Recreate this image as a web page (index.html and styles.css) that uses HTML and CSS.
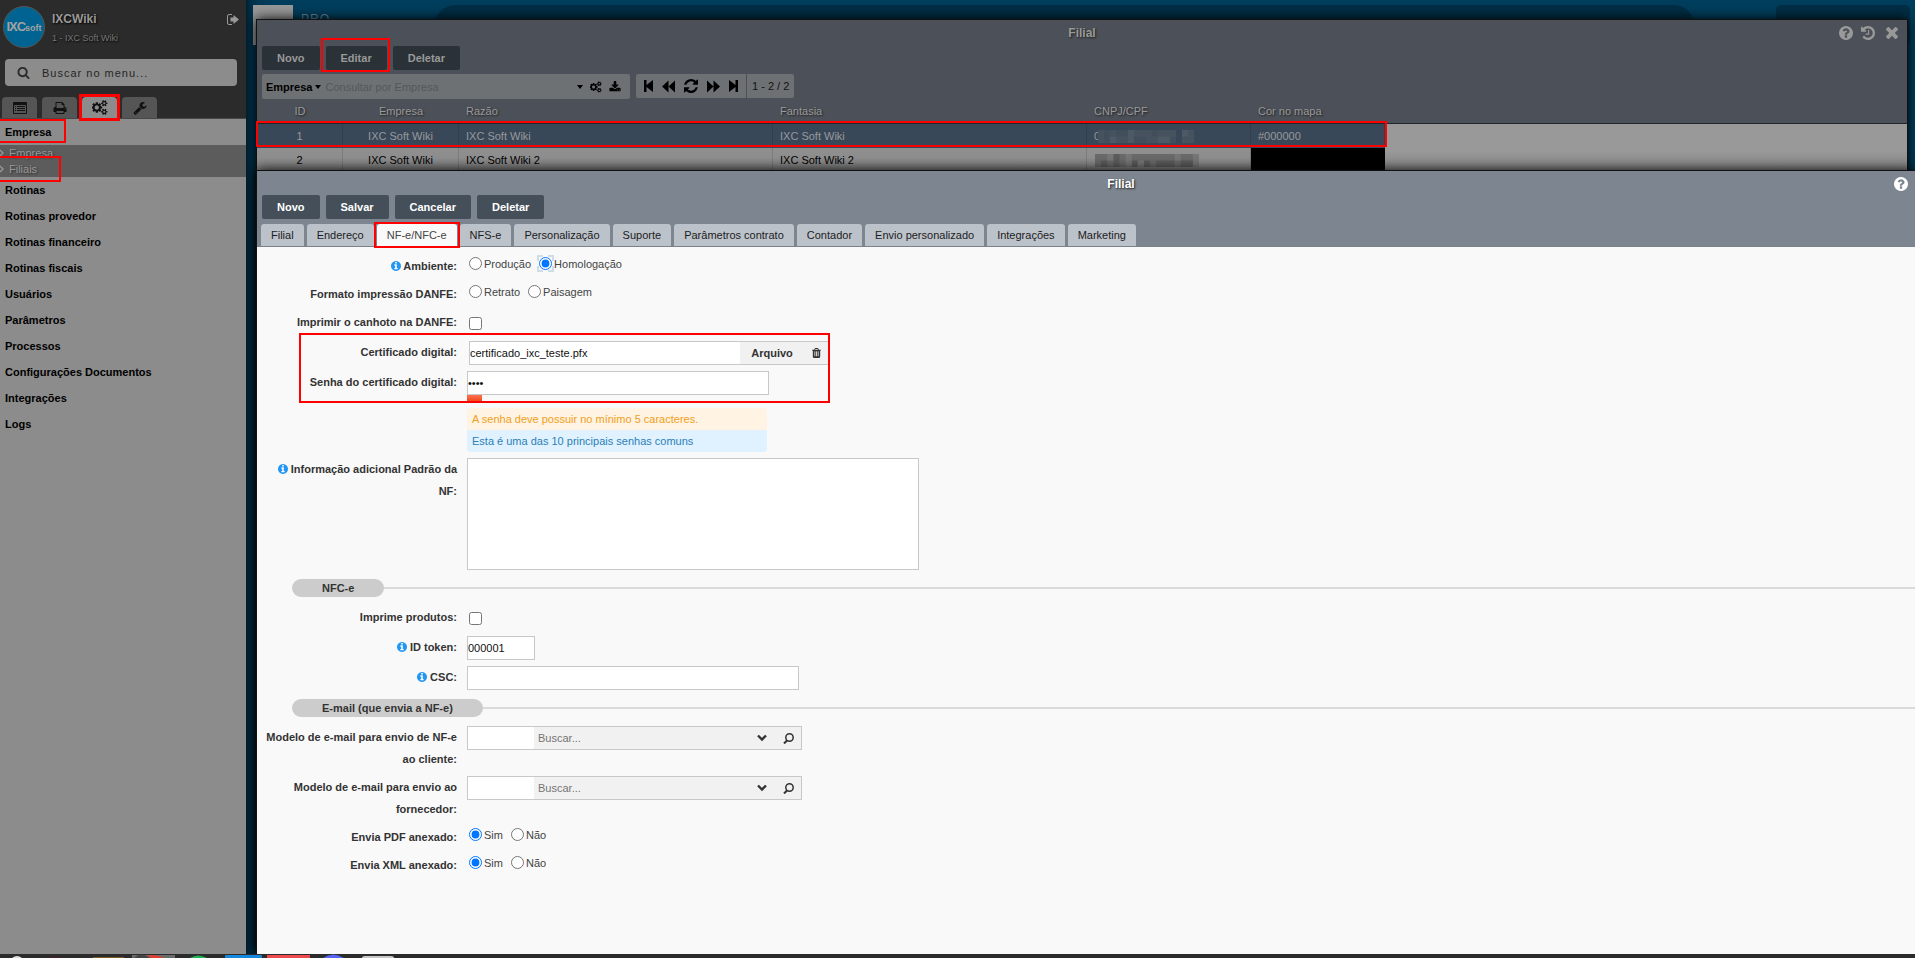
FILE: index.html
```
<!DOCTYPE html>
<html lang="pt-BR">
<head>
<meta charset="utf-8">
<title>Filial</title>
<link rel="stylesheet" href="styles.css">
</head>
<body>
<svg class="sprite" aria-hidden="true">
<symbol id="i-search" viewBox="0 0 1792 1792"><path d="M1216 832q0-185-131.500-316.500t-316.500-131.500-316.500 131.500-131.500 316.500 131.500 316.500 316.500 131.500 316.500-131.500 131.500-316.500zm512 832q0 52-38 90t-90 38q-54 0-90-38l-343-342q-179 124-399 124-143 0-273.500-55.500t-225-150-150-225-55.500-273.500 55.500-273.500 150-225 225-150 273.500-55.500 273.500 55.500 225 150 150 225 55.500 273.500q0 220-124 399l343 343q37 37 37 90z"/></symbol>
<symbol id="i-wrench" viewBox="0 0 1792 1792"><path d="M448 1472q0-26-19-45t-45-19-45 19-19 45 19 45 45 19 45-19 19-45zm644-420l-682 682q-37 37-90 37-52 0-91-37l-106-108q-38-36-38-90 0-53 38-91l681-681q39 98 114.500 173.500t173.500 114.500zm634-435q0 39-23 106-47 134-164.500 217.500t-258.500 83.500q-185 0-316.500-131.500t-131.500-316.500 131.500-316.500 316.500-131.500q58 0 121.500 16.500t107.500 46.500q16 11 16 28t-16 28l-293 169v224l193 107q5-3 79-48.500t135.500-81 70.500-35.500q15 0 23.500 10t8.500 25z"/></symbol>
<symbol id="i-print" viewBox="0 0 1792 1792"><path d="M448 1536h896v-256h-896v256zm0-640h896v-384h-160q-40 0-68-28t-28-68v-160h-640v640zm1152 64q0-26-19-45t-45-19-45 19-19 45 19 45 45 19 45-19 19-45zm128 0v416q0 13-9.500 22.500t-22.500 9.500h-224v160q0 40-28 68t-68 28h-960q-40 0-68-28t-28-68v-160h-224q-13 0-22.500-9.500t-9.500-22.500v-416q0-79 56.500-135.500t135.500-56.500h64v-544q0-40 28-68t68-28h672q40 0 88 20t76 48l152 152q28 28 48 76t20 88v256h64q79 0 135.500 56.500t56.500 135.500z"/></symbol>
<symbol id="i-cogs" viewBox="0 0 1920 1792"><path d="M832 896q0-106-75-181t-181-75-181 75-75 181 75 181 181 75 181-75 75-181zm768 512q0-52-38-90t-90-38-90 38-38 90q0 53 37.500 90.500t90.500 37.500 90.500-37.500 37.500-90.500zm0-1024q0-52-38-90t-90-38-90 38-38 90q0 53 37.500 90.500t90.500 37.500 90.500-37.500 37.500-90.500zm-384 421v185q0 10-7 19.500t-16 10.500l-155 24q-11 35-32 76 34 48 90 115 7 11 7 20 0 12-7 19-23 30-82.500 89.500t-78.500 59.500q-11 0-21-7l-115-90q-37 19-77 31-11 108-23 155-7 24-30 24h-186q-11 0-20-7.500t-10-17.500l-23-153q-34-10-75-31l-118 89q-7 7-20 7-11 0-21-8-144-133-144-160 0-9 7-19 10-14 41-53t47-61q-23-44-35-82l-152-24q-10-1-17-9.500t-7-19.500v-185q0-10 7-19.500t16-10.500l155-24q11-35 32-76-34-48-90-115-7-11-7-20 0-12 7-20 22-30 82-89t79-59q11 0 21 7l115 90q34-18 77-32 11-108 23-154 7-24 30-24h186q11 0 20 7.500t10 17.500l23 153q34 10 75 31l118-89q8-7 20-7 11 0 21 8 144 133 144 160 0 8-7 19-12 16-42 54t-45 60q23 48 34 82l152 23q10 2 17 10.500t7 19.500zm640 533v140q0 16-149 31-12 27-30 52 51 113 51 138 0 4-4 7-122 71-124 71-8 0-46-47t-52-68q-20 2-30 2t-30-2q-14 21-52 68t-46 47q-2 0-124-71-4-3-4-7 0-25 51-138-18-25-30-52-149-15-149-31v-140q0-16 149-31 13-29 30-52-51-113-51-138 0-4 4-7 4-2 35-20t59-34 30-16q8 0 46 46.500t52 67.500q20-2 30-2t30 2q51-71 92-112l6-2q4 0 124 70 4 3 4 7 0 25-51 138 17 23 30 52 149 15 149 31zm0-1024v140q0 16-149 31-12 27-30 52 51 113 51 138 0 4-4 7-122 71-124 71-8 0-46-47t-52-68q-20 2-30 2t-30-2q-14 21-52 68t-46 47q-2 0-124-71-4-3-4-7 0-25 51-138-18-25-30-52-149-15-149-31v-140q0-16 149-31 13-29 30-52-51-113-51-138 0-4 4-7 4-2 35-20t59-34 30-16q8 0 46 46.500t52 67.500q20-2 30-2t30 2q51-71 92-112l6-2q4 0 124 70 4 3 4 7 0 25-51 138 17 23 30 52 149 15 149 31z"/></symbol>
<symbol id="i-help" viewBox="128 128 1536 1536"><path d="M1024 1376v-192q0-14-9-23t-23-9h-192q-14 0-23 9t-9 23v192q0 14 9 23t23 9h192q14 0 23-9t9-23zm256-672q0-88-55.500-163t-138.500-116-170-41q-243 0-371 213-15 24 8 42l132 100q7 6 19 6 16 0 25-12 53-68 86-92 34-24 86-24 48 0 85.500 26t37.500 59q0 38-20 61t-68 45q-63 28-115.500 86.500t-52.500 125.500v36q0 14 9 23t23 9h192q14 0 23-9t9-23q0-19 21.500-49.500t54.500-49.500q32-18 49-28.500t46-35 44.500-48 28-60.500 12.500-81zm384 192q0 209-103 385.500t-279.500 279.500-385.500 103-385.500-103-279.500-279.500-103-385.500 103-385.500 279.500-279.500 385.500-103 385.500 103 279.500 279.500 103 385.500z"/></symbol>
<symbol id="i-info" viewBox="128 128 1536 1536"><path d="M1152 1376v-160q0-14-9-23t-23-9h-96v-512q0-14-9-23t-23-9h-320q-14 0-23 9t-9 23v160q0 14 9 23t23 9h96v320h-96q-14 0-23 9t-9 23v160q0 14 9 23t23 9h448q14 0 23-9t9-23zm-128-896v-160q0-14-9-23t-23-9h-192q-14 0-23 9t-9 23v160q0 14 9 23t23 9h192q14 0 23-9t9-23zm640 416q0 209-103 385.500t-279.500 279.500-385.500 103-385.500-103-279.500-279.500-103-385.500 103-385.500 279.500-279.500 385.500-103 385.500 103 279.500 279.500 103 385.500z"/></symbol>
<symbol id="i-history" viewBox="128 128 1536 1536"><path d="M1664 896q0 156-61 298t-164 245-245 164-298 61q-172 0-327-72.500t-264-204.500q-7-10-6.500-22.500t8.500-20.500l137-138q10-9 25-9 16 2 23 12 73 95 179 147t225 52q104 0 198.500-40.500t163.500-109.500 109.500-163.500 40.500-198.500-40.500-198.500-109.500-163.500-163.500-109.500-198.500-40.500q-98 0-188 35.500t-160 101.500l137 138q31 30 14 69-17 40-59 40h-448q-26 0-45-19t-19-45v-448q0-42 40-59 39-17 69 14l130 129q107-101 244.500-156.500t284.500-55.500q156 0 298 61t245 164 164 245 61 298zm-640-288v448q0 14-9 23t-23 9h-320q-14 0-23-9t-9-23v-64q0-14 9-23t23-9h224v-352q0-14 9-23t23-9h64q14 0 23 9t9 23z"/></symbol>
<symbol id="i-close" viewBox="302 366 1188 1188"><path d="M1490 1322q0 40-28 68l-136 136q-28 28-68 28t-68-28l-294-294-294 294q-28 28-68 28t-68-28l-136-136q-28-28-28-68t28-68l294-294-294-294q-28-28-28-68t28-68l136-136q28-28 68-28t68 28l294 294 294-294q28-28 68-28t68 28l136 136q28 28 28 68t-28 68l-294 294 294 294q28 28 28 68z"/></symbol>
<symbol id="i-download" viewBox="0 0 1792 1792"><path d="M1344 1344q0-26-19-45t-45-19-45 19-19 45 19 45 45 19 45-19 19-45zm256 0q0-26-19-45t-45-19-45 19-19 45 19 45 45 19 45-19 19-45zm128-224v320q0 40-28 68t-68 28h-1472q-40 0-68-28t-28-68v-320q0-40 28-68t68-28h465l135 136q58 56 136 56t136-56l136-136h464q40 0 68 28t28 68zm-325-569q17 41-14 70l-448 448q-18 19-45 19t-45-19l-448-448q-31-29-14-70 17-39 59-39h256v-448q0-26 19-45t45-19h256q26 0 45 19t19 45v448h256q42 0 59 39z"/></symbol>
<symbol id="i-refresh" viewBox="128 128 1536 1536"><path d="M1639 1056q0 5-1 7-64 268-268 434.500t-478 166.500q-146 0-282.500-55t-243.500-157l-129 129q-19 19-45 19t-45-19-19-45v-448q0-26 19-45t45-19h448q26 0 45 19t19 45-19 45l-137 137q71 66 161 102t187 36q134 0 250-65t186-179q11-17 53-117 8-23 30-23h192q13 0 22.500 9.500t9.500 22.500zm25-800v448q0 26-19 45t-45 19h-448q-26 0-45-19t-19-45 19-45l138-138q-148-137-349-137-134 0-250 65t-186 179q-11 17-53 117-8 23-30 23h-199q-13 0-22.500-9.500t-9.500-22.500v-7q65-268 270-434.500t480-166.500q146 0 284 55.500t245 156.500l130-129q19-19 45-19t45 19 19 45z"/></symbol>
<symbol id="i-trash" viewBox="192 128 1408 1536"><path d="M704 1376v-704q0-14-9-23t-23-9h-64q-14 0-23 9t-9 23v704q0 14 9 23t23 9h64q14 0 23-9t9-23zm256 0v-704q0-14-9-23t-23-9h-64q-14 0-23 9t-9 23v704q0 14 9 23t23 9h64q14 0 23-9t9-23zm256 0v-704q0-14-9-23t-23-9h-64q-14 0-23 9t-9 23v704q0 14 9 23t23 9h64q14 0 23-9t9-23zm-544-992h448l-48-117q-7-9-17-11h-317q-10 2-17 11zm928 32v64q0 14-9 23t-23 9h-96v948q0 83-47 143.500t-113 60.500h-832q-66 0-113-58.500t-47-141.500v-952h-96q-14 0-23-9t-9-23v-64q0-14 9-23t23-9h309l70-167q15-37 54-63t79-26h320q40 0 79 26t54 63l70 167h309q14 0 23 9t9 23z"/></symbol>
<symbol id="i-list" viewBox="0 0 14 12"><path fill-rule="evenodd" d="M1 0h12q1 0 1 1v10q0 1-1 1H1q-1 0-1-1V1q0-1 1-1zM1 3v8h12V3zM2 4h1v1H2zM4 4h8v1H4zM2 6h1v1H2zM4 6h8v1H4zM2 8h1v1H2zM4 8h8v1H4z"/></symbol>
<symbol id="i-logout" viewBox="0 0 12 11"><path fill="none" stroke="currentColor" d="M5 .5H2Q.5 .5 .5 2v7Q.5 10.500 2 10.500h3"/><path d="M6.500 1L12 5.500 6.500 10V7.500H3.500v-4h3z"/></symbol>
<symbol id="i-first" viewBox="0 0 9 12"><path d="M0 0h2.500v5L9 0v12L2.500 7v5H0z"/></symbol>
<symbol id="i-prev" viewBox="0 0 13 12"><path d="M6.500 0v12L0 6zM13 0v12L6.500 6z"/></symbol>
<symbol id="i-next" viewBox="0 0 13 12"><path d="M0 0v12l6.500-6zM6.500 0v12L13 6z"/></symbol>
<symbol id="i-last" viewBox="0 0 9 12"><path d="M9 0H6.500v5L0 0v12l6.500-5v5H9z"/></symbol>
<symbol id="i-caret" viewBox="0 0 6 4"><path d="M0 0h6L3 4z"/></symbol>
<symbol id="i-chevron" viewBox="0 0 10 8"><path fill="none" stroke="currentColor" stroke-width="2.400" d="M1 1.500l4 4 4-4"/></symbol>
<symbol id="i-lens" viewBox="0 0 11 11"><circle cx="6.500" cy="4.500" r="3.700" fill="none" stroke="currentColor" stroke-width="1.500"/><path stroke="currentColor" stroke-width="2" d="M4 7.500L1 10.500"/></symbol>
<symbol id="i-angle" viewBox="0 0 4 8"><path fill="none" stroke="currentColor" stroke-width="1.300" d="M0 1l3 3-3 3"/></symbol>
</svg>

<main class="app">
  <nav class="sidebar">
    <div class="sidebar-top">
      <div class="profile">
        <div class="logo">IXC<span class="logo-small">soft</span></div>
        <div class="who"><strong class="who-name">IXCWiki</strong><span class="who-company">1 - IXC Soft Wiki</span></div>
        <button class="icon-button" aria-label="Sair"><svg class="i-exit"><use href="#i-logout"/></svg></button>
      </div>
      <label class="menu-search"><svg class="i-13"><use href="#i-search"/></svg><input class="menu-input" type="text" placeholder="Buscar no menu..." aria-label="Buscar no menu"></label>
      <div class="menu-tabs">
        <button class="menu-tab" aria-label="Cadastros"><svg class="i-list"><use href="#i-list"/></svg></button>
        <button class="menu-tab" aria-label="Relatórios"><svg class="i-14"><use href="#i-print"/></svg></button>
        <button class="menu-tab menu-tab-on" aria-label="Sistema"><svg class="i-16"><use href="#i-cogs"/></svg><span class="mark mark-gear"></span></button>
        <button class="menu-tab" aria-label="Ferramentas"><svg class="i-14"><use href="#i-wrench"/></svg></button>
      </div>
    </div>
    <div class="menu">
      <a class="menu-item" href="#">Empresa<span class="mark mark-company"></span></a>
      <div class="submenu">
        <a class="submenu-item" href="#"><svg class="i-angle"><use href="#i-angle"/></svg>Empresa</a>
        <a class="submenu-item" href="#"><svg class="i-angle"><use href="#i-angle"/></svg>Filiais<span class="mark mark-branches"></span></a>
      </div>
      <a class="menu-item" href="#">Rotinas</a>
      <a class="menu-item" href="#">Rotinas provedor</a>
      <a class="menu-item" href="#">Rotinas financeiro</a>
      <a class="menu-item" href="#">Rotinas fiscais</a>
      <a class="menu-item" href="#">Usuários</a>
      <a class="menu-item" href="#">Parâmetros</a>
      <a class="menu-item" href="#">Processos</a>
      <a class="menu-item" href="#">Configurações Documentos</a>
      <a class="menu-item" href="#">Integrações</a>
      <a class="menu-item" href="#">Logs</a>
    </div>
  </nav>

  <div class="desktop">
    <div class="backdrop">
      <span class="backdrop-logo"></span>
      <span class="backdrop-name">PRO —</span>
      <span class="backdrop-bar"></span>
      <span class="backdrop-card"></span>
    </div>

    <section class="window window-list">
      <header class="titlebar titlebar-list">
        <h2 class="title">Filial</h2>
        <div class="title-actions">
          <button class="icon-button" aria-label="Ajuda"><svg class="i-14"><use href="#i-help"/></svg></button>
          <button class="icon-button" aria-label="Histórico"><svg class="i-14"><use href="#i-history"/></svg></button>
          <button class="icon-button icon-close" aria-label="Fechar"><svg class="i-12"><use href="#i-close"/></svg></button>
        </div>
      </header>
      <div class="buttons">
        <button class="btn btn-dim">Novo</button>
        <button class="btn btn-dim">Editar<span class="mark mark-edit"></span></button>
        <button class="btn btn-dim">Deletar</button>
      </div>
      <div class="tools">
        <div class="query">
          <button class="query-field">Empresa <svg class="i-caret"><use href="#i-caret"/></svg></button>
          <input class="query-input" type="text" placeholder="Consultar por Empresa" aria-label="Consultar por Empresa">
          <button class="icon-button" aria-label="Opções"><svg class="i-caret"><use href="#i-caret"/></svg></button>
          <button class="icon-button" aria-label="Configurar"><svg class="i-12"><use href="#i-cogs"/></svg></button>
          <button class="icon-button" aria-label="Exportar"><svg class="i-12"><use href="#i-download"/></svg></button>
        </div>
        <div class="pager">
          <div class="pager-nav">
            <button class="icon-button" aria-label="Primeira"><svg class="i-end"><use href="#i-first"/></svg></button>
            <button class="icon-button" aria-label="Anterior"><svg class="i-13"><use href="#i-prev"/></svg></button>
            <button class="icon-button" aria-label="Atualizar"><svg class="i-14"><use href="#i-refresh"/></svg></button>
            <button class="icon-button" aria-label="Próxima"><svg class="i-13"><use href="#i-next"/></svg></button>
            <button class="icon-button" aria-label="Última"><svg class="i-end"><use href="#i-last"/></svg></button>
          </div>
          <span class="pager-count">1 - 2 / 2</span>
        </div>
      </div>
      <div class="grid-wrap">
        <table class="grid">
          <colgroup><col class="c-id"><col class="c-company"><col class="c-name"><col class="c-name"><col class="c-doc"><col class="c-color"></colgroup>
          <thead><tr><th class="mid">ID</th><th class="mid">Empresa</th><th>Razão</th><th>Fantasia</th><th>CNPJ/CPF</th><th>Cor no mapa</th></tr></thead>
          <tbody>
            <tr class="row-on"><td class="mid">1</td><td class="mid">IXC Soft Wiki</td><td>IXC Soft Wiki</td><td>IXC Soft Wiki</td>
              <td><span class="masked">0<svg class="mosaic" viewBox="0 0 16 2" preserveAspectRatio="none"><path fill="#46535f" d="M0 0h16v2H0z"/><path fill="#414f5d" d="M1 0h1v2H1zM3 0h2v1H3zM6 1h2v1H6zM9 0h1v1H9zM12 1h1v1h-1z"/><path fill="#374757" d="M13 0h1v2h-1z"/><path fill="#4d5965" d="M2 1h1v1H2zM5 0h1v2H5zM10 1h2v1h-2zM14 0h1v1h-1z"/></svg></span></td>
              <td>#000000</td></tr>
            <tr class="row-two"><td class="mid">2</td><td class="mid">IXC Soft Wiki</td><td>IXC Soft Wiki 2</td><td>IXC Soft Wiki 2</td>
              <td><svg class="mosaic mosaic-wide" viewBox="0 0 17 2" preserveAspectRatio="none"><path fill="#6a6a6a" d="M0 0h17v2H0z"/><path fill="#5c5c5c" d="M1 1h1v1H1zM3 0h1v2H3zM6 1h1v1H6zM8 1h1v1H8zM10 1h3v1h-3zM14 1h2v1h-2z"/><path fill="#777" d="M2 0h1v1H2zM5 0h1v2H5zM7 1h1v1H7zM13 0h1v1h-1zM16 0h1v2h-1z"/></svg></td>
              <td class="swatch"></td></tr>
          </tbody>
        </table>
        <span class="mark mark-row"></span>
      </div>
    </section>

    <section class="window window-form">
      <header class="form-head">
        <div class="titlebar titlebar-form">
          <h2 class="title">Filial</h2>
          <div class="title-actions"><button class="icon-button" aria-label="Ajuda"><svg class="i-14"><use href="#i-help"/></svg></button></div>
        </div>
        <div class="buttons">
          <button class="btn">Novo</button><button class="btn">Salvar</button><button class="btn">Cancelar</button><button class="btn">Deletar</button>
        </div>
        <div class="tabs">
          <button class="tab">Filial</button><button class="tab">Endereço</button><button class="tab tab-on">NF-e/NFC-e<span class="mark mark-tab"></span></button><button class="tab">NFS-e</button><button class="tab">Personalização</button><button class="tab">Suporte</button><button class="tab">Parâmetros contrato</button><button class="tab">Contador</button><button class="tab">Envio personalizado</button><button class="tab">Integrações</button><button class="tab">Marketing</button>
        </div>
      </header>
      <form class="form">
        <div class="row">
          <span class="label"><svg class="i-info"><use href="#i-info"/></svg> Ambiente:</span>
          <div class="options">
            <label class="option"><input class="radio" type="radio" name="amb">Produção</label>
            <label class="option"><input class="radio radio-focus" type="radio" name="amb" checked>Homologação</label>
          </div>
        </div>
        <div class="row">
          <span class="label">Formato impressão DANFE:</span>
          <div class="options">
            <label class="option"><input class="radio" type="radio" name="danfe">Retrato</label>
            <label class="option"><input class="radio" type="radio" name="danfe">Paisagem</label>
          </div>
        </div>
        <div class="row">
          <label class="label" for="canhoto">Imprimir o canhoto na DANFE:</label>
          <div class="control"><input class="check" type="checkbox" id="canhoto"></div>
        </div>
        <div class="cert-group">
          <div class="row">
            <label class="label" for="cert">Certificado digital:</label>
            <div class="combo combo-file">
              <input class="combo-text" type="text" id="cert" value="certificado_ixc_teste.pfx">
              <button class="file-button" type="button">Arquivo</button>
              <button class="icon-button" type="button" aria-label="Remover"><svg class="i-trash"><use href="#i-trash"/></svg></button>
            </div>
          </div>
          <div class="row">
            <label class="label" for="senha">Senha do certificado digital:</label>
            <div class="stack">
              <input class="text w-password" type="password" id="senha" value="1234">
              <span class="strength"></span>
              <p class="note note-warn">A senha deve possuir no mínimo 5 caracteres.</p>
              <p class="note note-info">Esta é uma das 10 principais senhas comuns</p>
            </div>
          </div>
          <span class="mark mark-cert"></span>
        </div>
        <div class="row">
          <label class="label" for="info"><svg class="i-info"><use href="#i-info"/></svg> Informação adicional Padrão da NF:</label>
          <textarea class="area" id="info"></textarea>
        </div>
        <div class="divider"><h3 class="pill">NFC-e</h3></div>
        <div class="row">
          <label class="label" for="imprime">Imprime produtos:</label>
          <div class="control"><input class="check" type="checkbox" id="imprime"></div>
        </div>
        <div class="row">
          <label class="label" for="token"><svg class="i-info"><use href="#i-info"/></svg> ID token:</label>
          <input class="text w-token" type="text" id="token" value="000001">
        </div>
        <div class="row">
          <label class="label" for="csc"><svg class="i-info"><use href="#i-info"/></svg> CSC:</label>
          <input class="text w-csc" type="text" id="csc">
        </div>
        <div class="divider"><h3 class="pill">E-mail (que envia a NF-e)</h3></div>
        <div class="row">
          <label class="label" for="m1">Modelo de e-mail para envio de NF-e ao cliente:</label>
          <div class="combo combo-lookup">
            <input class="lookup-id" type="text" id="m1"><input class="lookup-text" type="text" placeholder="Buscar..." aria-label="Buscar modelo para cliente">
            <button class="icon-button" type="button" aria-label="Abrir"><svg class="i-chevron"><use href="#i-chevron"/></svg></button>
            <button class="icon-button" type="button" aria-label="Pesquisar"><svg class="i-lens"><use href="#i-lens"/></svg></button>
          </div>
        </div>
        <div class="row">
          <label class="label" for="m2">Modelo de e-mail para envio ao fornecedor:</label>
          <div class="combo combo-lookup">
            <input class="lookup-id" type="text" id="m2"><input class="lookup-text" type="text" placeholder="Buscar..." aria-label="Buscar modelo para fornecedor">
            <button class="icon-button" type="button" aria-label="Abrir"><svg class="i-chevron"><use href="#i-chevron"/></svg></button>
            <button class="icon-button" type="button" aria-label="Pesquisar"><svg class="i-lens"><use href="#i-lens"/></svg></button>
          </div>
        </div>
        <div class="row">
          <span class="label">Envia PDF anexado:</span>
          <div class="options">
            <label class="option"><input class="radio" type="radio" name="pdf" checked>Sim</label>
            <label class="option"><input class="radio" type="radio" name="pdf">Não</label>
          </div>
        </div>
        <div class="row">
          <span class="label">Envia XML anexado:</span>
          <div class="options">
            <label class="option"><input class="radio" type="radio" name="xml" checked>Sim</label>
            <label class="option"><input class="radio" type="radio" name="xml">Não</label>
          </div>
        </div>
      </form>
    </section>
  </div>
</main>
<footer class="taskbar">
  <svg class="taskbar-icons" viewBox="0 0 410 4"><path fill="#ddd" d="M12 4q5-4 10 0z"/><path fill="#4a1c2a" d="M47 4q8-3 15 0z"/><path fill="#7a5c24" d="M93 3h31v1H93z"/><path fill="#6a6a6a" d="M132 1h43v3h-43z"/><path fill="#444" d="M134 4q7-7 16 0z"/><path fill="#e53b2c" d="M147 1q12 0 17 3h-13z"/><path fill="#20b455" d="M190 4q8-5 17 0z"/><path fill="#1488dc" d="M225 4V2q0-1 1-1h35q1 0 1 1v2z"/><path fill="#ee4b4f" d="M267 1h43v3h-43z"/><path fill="#5865f2" d="M323 4q10-7 21 0z"/><path fill="#c8c8c8" d="M362 4q0-2 3-2h26q3 0 3 2z"/></svg>
</footer>
</body>
</html>
```
FILE: styles.css
```
* { box-sizing: border-box; }
body { margin: 0; height: 100vh; display: flex; flex-direction: column; overflow: hidden; font-family: "Liberation Sans", Arial, sans-serif; font-size: 11px; color: #333; background: #2b2b2b; }
button, input, textarea { font: inherit; color: inherit; margin: 0; padding: 0; border: 0; background: none; border-radius: 0; outline: 0; }
a { color: inherit; text-decoration: none; }
svg { display: block; flex: none; fill: currentColor; }
h2, h3, p { margin: 0; font-size: inherit; }
.sprite { position: absolute; width: 0; height: 0; }
.icon-button { display: flex; align-items: center; justify-content: center; }
.i-12 { width: 12px; height: 12px; }
.i-13 { width: 13px; height: 13px; }
.i-14 { width: 14px; height: 14px; }
.i-16 { width: 16px; height: 15px; }
.i-exit { width: 12px; height: 11px; color: #999; }
.i-list { width: 14px; height: 12px; }
.i-end { width: 9px; height: 12px; }
.i-caret { width: 6px; height: 4px; }
.i-angle { width: 4px; height: 8px; }
.i-trash { width: 9px; height: 10px; }
.i-chevron { width: 10px; height: 8px; }
.i-lens { width: 11px; height: 11px; }
.i-info { width: 10px; height: 10px; display: inline-block; vertical-align: -1px; color: #2196f3; }
.mark { position: absolute; border: 2px solid #f00; pointer-events: none; z-index: 3; }

.app { flex: 1; min-height: 0; display: flex; }
.sidebar { width: 246px; flex: none; background: #8c8c8c; color: #000; overflow: hidden; }
.sidebar-top { height: 119px; display: flex; flex-direction: column; background: #2b2b2b; border-bottom: 1px solid #484848; }
.profile { display: flex; align-items: flex-start; padding: 6px 7px 0 3px; height: 59px; }
.logo { width: 42px; height: 42px; border: 1px solid #555; border-radius: 50%; background: #006391; color: #a3a3a3; font-size: 13px; font-weight: bold; line-height: 40px; text-align: center; letter-spacing: -1px; }
.logo-small { font-size: 9px; letter-spacing: 0; }
.who { flex: 1; display: flex; flex-direction: column; padding: 5px 0 0 7px; color: #999; text-shadow: 1px 1px 2px #000; }
.who-name { font-size: 12px; line-height: 16px; }
.who-company { font-size: 9px; line-height: 22px; color: #777; }
.profile .icon-button { padding-top: 8px; }
.menu-search { display: flex; align-items: center; gap: 12px; height: 27px; margin: 0 9px 11px 5px; padding-left: 12px; border-radius: 4px; background: #8c8c8c; color: #2b2b2b; }
.menu-input { flex: 1; letter-spacing: 1px; }
.menu-input::placeholder { color: #262626; }
.menu-tabs { display: flex; gap: 5px; padding-left: 2px; }
.menu-tab { position: relative; width: 35px; height: 21px; display: flex; align-items: center; justify-content: center; border-radius: 4px 4px 0 0; background: #555; color: #111; }
.menu-tab-on { background: #8c8c8c; }
.mark-gear { border-width: 3px; left: -3px; right: -3px; top: -3px; bottom: -3px; }
.menu-item { position: relative; display: block; padding-left: 5px; line-height: 26px; font-weight: bold; }
.mark-company { left: -2px; top: 0; width: 68px; height: 24px; }
.submenu { background: #5c5c5c; color: #999; }
.submenu-item { position: relative; display: flex; align-items: center; gap: 5px; line-height: 16px; text-shadow: 1px 1px 2px #333; }
.mark-branches { left: -2px; top: -5px; width: 63px; height: 26px; }

.desktop { position: relative; flex: 1; min-width: 0; background: #003e5d; overflow: hidden; }
.backdrop { position: absolute; inset: 0; display: flex; align-items: flex-start; padding: 5px 5px 0 7px; background: linear-gradient(90deg, #002131, #002f47 5px, #003a57 14px, #003e5d 30px); }
.backdrop-logo { width: 40px; height: 40px; background: #999; }
.backdrop-name { width: 142px; padding: 6px 0 0 8px; color: #6d8797; font-size: 12px; line-height: 16px; letter-spacing: 1px; }
.backdrop-bar { flex: 1; height: 40px; border-radius: 20px; background: #002e45; margin-right: 82px; }
.backdrop-card { width: 134px; height: 40px; border-radius: 5px; background: #002e45; }
.window { position: absolute; left: 10px; border: 1px solid #111; border-right: 0; box-shadow: 0 0 12px #000; }
.window-list { top: 19px; right: 7px; bottom: 0; border-right: 1px solid #111; background: #4c5058; color: #000; }
.window-form { top: 170px; right: 0; bottom: 0; border-bottom: 0; background: #f9f9f9; display: flex; flex-direction: column; }
.titlebar { display: grid; grid-template-columns: 1fr auto 1fr; align-items: center; height: 26px; color: #999; }
.titlebar-form { height: 24px; padding-left: 70px; color: #fff; }
.title { grid-column: 2; font-size: 12px; line-height: 26px; text-shadow: 1px 1px 2px #222; }
.title-actions { display: flex; justify-content: flex-end; gap: 8px; padding-right: 9px; }
.titlebar-form .title-actions { padding-right: 7px; }
.icon-close { margin-left: 3px; }
.buttons { display: flex; gap: 6px; padding-left: 5px; }
.btn { position: relative; height: 24px; padding: 0 15px; border-radius: 2px; background: #454f5a; color: #fff; font-weight: bold; }
.btn-dim { background: #2a3137; color: #999; }
.mark-edit { left: -5px; top: -8px; right: -3px; bottom: -2px; }
.tools { display: flex; gap: 6px; padding: 4px 0 0 5px; }
.query { width: 368px; height: 25px; display: flex; align-items: center; gap: 7px; padding: 0 9px 0 4px; border-radius: 2px; background: #6d7174; }
.query-field { display: flex; align-items: center; gap: 3px; font-weight: bold; }
.query-input { flex: 1; min-width: 0; margin-left: -3px; }
.query-input::placeholder { color: #54575a; }
.pager { display: flex; gap: 1px; height: 24px; }
.pager-nav { display: flex; align-items: center; gap: 9px; padding: 0 8px; background: #6d7174; border-radius: 2px 0 0 2px; }
.pager-count { padding: 0 5px; line-height: 24px; background: #6d7174; border-radius: 0 2px 2px 0; color: #111; }
.grid-wrap { position: relative; background: linear-gradient(#4c5058 24px, #20262b 24px, #20262b 25px, #999 25px, #999 52px, #888 72px); height: 72px; }
.grid { border-collapse: separate; border-spacing: 0; table-layout: fixed; width: 1128px; }
.c-id { width: 86px; }
.c-company { width: 116px; }
.c-name { width: 314px; }
.c-doc { width: 164px; }
.c-color { width: 134px; }
.grid th, .grid td { height: 24px; padding: 0 7px; text-align: left; font-weight: normal; }
.grid th { height: 25px; padding-bottom: 2px; color: #999; text-shadow: 1px 1px 2px #222; }
.grid td { border-right: 1px solid #00000020; }
.grid .mid { text-align: center; }
.row-on { background: #384859; color: #999; }
.row-two { background: linear-gradient(#8f8f8f, #8f8f8f 10px, #808080); }
.grid .swatch { background: #000; }
.masked { display: flex; align-items: center; }
.mosaic { width: 96px; height: 13px; margin-left: -2px; }
.mosaic-wide { width: 104px; margin-left: 1px; }
.mark-row { left: -1px; top: 22px; width: 1131px; height: 26px; }

.form-head { background: #7d8690; border-bottom: 1px solid #7a838c; }
.tabs { display: flex; gap: 3px; padding: 5px 0 0 4px; }
.tab { position: relative; height: 22px; padding: 0 10px; border-radius: 3px 3px 0 0; background: #bcc2ca; color: #1c1c1c; }
.tab-on { background: #f9f9f9; color: #444; }
.mark-tab { left: -3px; top: -2px; right: -3px; bottom: -2px; }
.form { flex: 1; display: flex; flex-direction: column; gap: 6px; padding-top: 8px; }
.row { display: flex; align-items: flex-start; gap: 10px; padding-left: 5px; }
.label { width: 195px; flex: none; text-align: right; line-height: 22px; font-weight: bold; }
.options { display: flex; gap: 6px; height: 22px; }
.option { display: flex; align-items: center; gap: 2px; height: 17px; color: #444; }
.radio, .check { width: 13px; height: 13px; margin: 0 0 0 2px; accent-color: #0075ff; }
.radio-focus { outline: 2px dashed #cfdde6; outline-offset: 0; }
.control { height: 24px; display: flex; align-items: center; }
.cert-group { position: relative; display: flex; flex-direction: column; gap: 6px; }
.mark-cert { left: 42px; top: -8px; width: 531px; height: 70px; }
.text, .combo, .area { border: 1px solid #c8c8c8; background: #fff; color: #111; }
.text { height: 24px; padding: 0; }
.w-password { width: 302px; }
.w-token { width: 68px; }
.w-csc { width: 332px; }
.area { width: 452px; height: 112px; resize: none; }
.combo { display: flex; align-items: stretch; height: 24px; background: #f1f1f1; color: #333; }
.combo-file { width: 360px; margin-left: 2px; border-right: 0; }
.combo-text { width: 270px; background: #fff; color: #111; }
.file-button { width: 64px; font-weight: bold; }
.combo-file .icon-button { flex: 1; }
.combo-lookup { width: 335px; }
.lookup-id { width: 66px; background: #fff; }
.lookup-text { flex: 1; min-width: 0; padding-left: 4px; }
.lookup-text::placeholder { color: #757575; }
.combo-lookup .icon-button { width: 26px; }
.stack { display: flex; flex-direction: column; }
.strength { width: 15px; height: 6px; margin-bottom: 7px; background: linear-gradient(#ff7350, #f04a20); }
.note { width: 300px; line-height: 22px; padding-left: 5px; }
.note-warn { background: #fff3e3; color: #f0a020; border-radius: 3px 3px 0 0; }
.note-info { background: #e0f2ff; color: #2c7fb8; border-radius: 0 0 3px 3px; }
.divider { display: flex; align-items: center; height: 24px; padding-left: 35px; }
.divider::after { content: ""; flex: 1; height: 2px; background: #dadada; }
.pill { padding: 0 30px; line-height: 18px; border-radius: 9px; background: #ccc; }

.taskbar { height: 4px; background: #2b2b2b; overflow: hidden; }
.taskbar-icons { width: 410px; height: 4px; }
```
